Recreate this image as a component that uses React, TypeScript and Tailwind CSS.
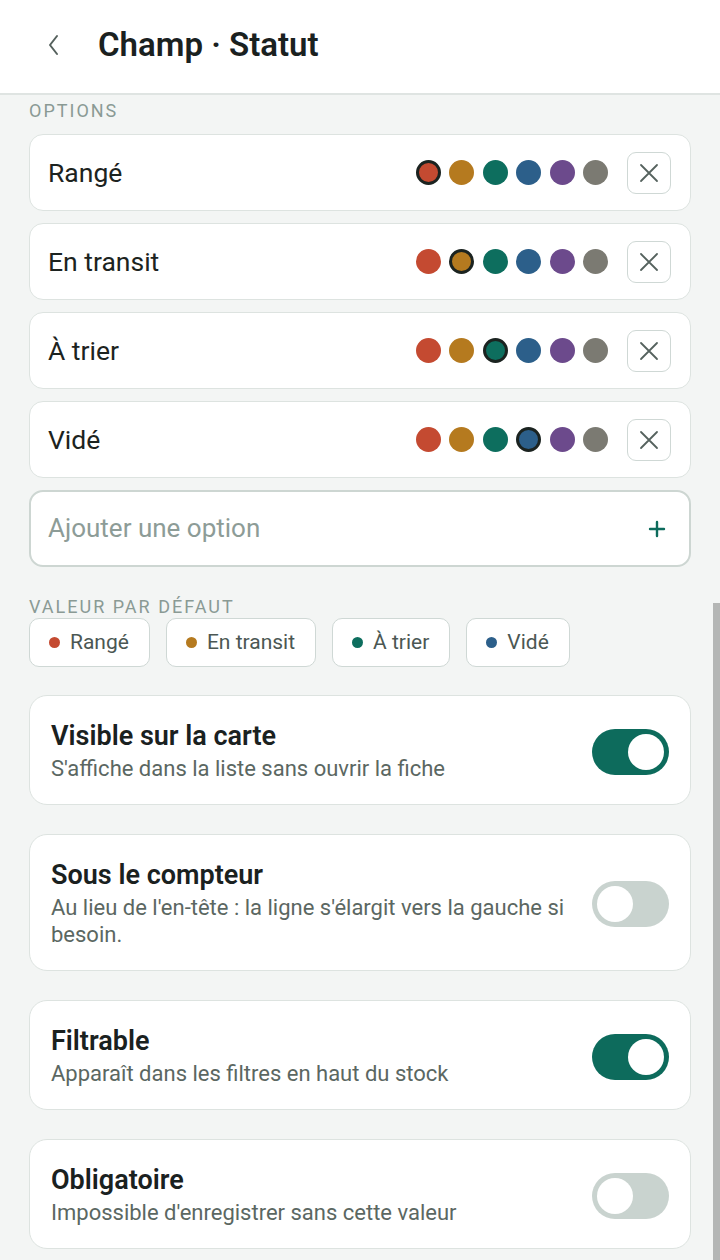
import { Plus } from "lucide-react";

const COLORS = ["#c44a31", "#b57a1f", "#0d6e5e", "#2c5f8a", "#6c4a8c", "#7b7a72"];

const options = [
  { label: "Rangé", selected: 0 },
  { label: "En transit", selected: 1 },
  { label: "À trier", selected: 2 },
  { label: "Vidé", selected: 3 },
];

const toggles = [
  { title: "Visible sur la carte", desc: "S'affiche dans la liste sans ouvrir la fiche", on: true },
  {
    title: "Sous le compteur",
    desc: "Au lieu de l'en-tête : la ligne s'élargit vers la gauche si besoin.",
    on: false,
  },
  { title: "Filtrable", desc: "Apparaît dans les filtres en haut du stock", on: true },
  { title: "Obligatoire", desc: "Impossible d'enregistrer sans cette valeur", on: false },
];

function OptionRow({ label, selected }: { label: string; selected: number }) {
  return (
    <div className="flex h-[77px] items-center rounded-[14px] border border-[#dde3e0] bg-white pl-[18px] pr-[19px]">
      <span className="flex-1 text-[26.5px] text-[#1c2320]">{label}</span>
      <div className="flex items-center gap-[8.5px]">
        {COLORS.map((c, i) => (
          <span
            key={c}
            className={
              i === selected
                ? "h-[25px] w-[25px] rounded-full border-[3px] border-[#1b2320]"
                : "h-[25px] w-[25px] rounded-full"
            }
            style={{ backgroundColor: c }}
          />
        ))}
      </div>
      <button className="ml-[19px] flex h-[42px] w-[44px] items-center justify-center rounded-[9px] border border-[#cfd8d5] bg-white">
        <svg width="20" height="20" viewBox="0 0 20 20" fill="none" stroke="#55625e" strokeWidth="1.8" strokeLinecap="round">
          <path d="M2 2 L18 18 M18 2 L2 18" />
        </svg>
      </button>
    </div>
  );
}

function Toggle({ on }: { on: boolean }) {
  return (
    <div
      className={
        on
          ? "flex h-[46px] w-[77px] shrink-0 items-center justify-end rounded-full bg-[#0d6b5c] px-[5px]"
          : "flex h-[46px] w-[77px] shrink-0 items-center justify-start rounded-full bg-[#c9d3cf] px-[5px]"
      }
    >
      <span className="h-[36px] w-[36px] rounded-full bg-white" />
    </div>
  );
}

export default function App() {
  return (
    <div
      className="relative min-h-[1260px] overflow-hidden bg-[#f3f5f4]"
      style={{ fontFamily: "Roboto, 'Noto Sans', sans-serif" }}
    >
      <header className="flex h-[95px] items-center border-b-2 border-[#dfe4e2] bg-white pb-[4px] pl-[42px]">
        <svg width="24" height="24" viewBox="0 0 24 24" fill="none" stroke="#55615d" strokeWidth="2" strokeLinecap="round" strokeLinejoin="round">
          <path d="M15 3 L8 12 L15 21" />
        </svg>
        <h1 className="ml-[32px] text-[33px] font-semibold text-[#1a211f]">Champ · Statut</h1>
      </header>

      <main className="px-[29px] pb-[20px]">
        <div className="pt-[4px] text-[18px] leading-[24px] tracking-[2px] text-[#8a9a94]">OPTIONS</div>
        <div className="mt-[11px] flex flex-col gap-[12px]">
          {options.map((o) => (
            <OptionRow key={o.label} label={o.label} selected={o.selected} />
          ))}
          <div className="flex h-[77px] items-center rounded-[14px] border-2 border-[#cdd6d2] bg-white pl-[17px] pr-[20px]">
            <span className="flex-1 text-[26px] text-[#8d9c97]">Ajouter une option</span>
            <Plus size={24} strokeWidth={2.4} className="text-[#0d6b5c]" />
          </div>
        </div>

        <div className="mt-[28px] text-[18px] leading-[24px] tracking-[2px] text-[#8a9a94]">VALEUR PAR DÉFAUT</div>
        <div className="mt-[-1px] flex gap-[16px]">
          {options.map((o, i) => (
            <div
              key={o.label}
              className="flex h-[49px] items-center gap-[10px] rounded-[10px] border border-[#cfd8d5] bg-white pl-[19px] pr-[20px] text-[21px] text-[#4b5753]"
            >
              <span className="h-[11px] w-[11px] rounded-full" style={{ backgroundColor: COLORS[i] }} />
              {o.label}
            </div>
          ))}
        </div>

        <div className="mt-[28px] flex flex-col gap-[29px]">
          {toggles.map((t) => (
            <div
              key={t.title}
              className="flex items-center gap-[20px] rounded-[18px] border border-[#dde3e0] bg-white pb-[22px] pl-[21px] pr-[21px] pt-[25px]"
            >
              <div className="flex-1">
                <div className="text-[27px] font-semibold leading-[30px] text-[#1a211f]">{t.title}</div>
                <div className="mt-[4px] text-[22px] leading-[27px] text-[#5b6762]">{t.desc}</div>
              </div>
              <Toggle on={t.on} />
            </div>
          ))}
        </div>
      </main>

      <div className="absolute right-0 top-[603px] h-[657px] w-[7px] bg-[#b4b6b5]" />
    </div>
  );
}
